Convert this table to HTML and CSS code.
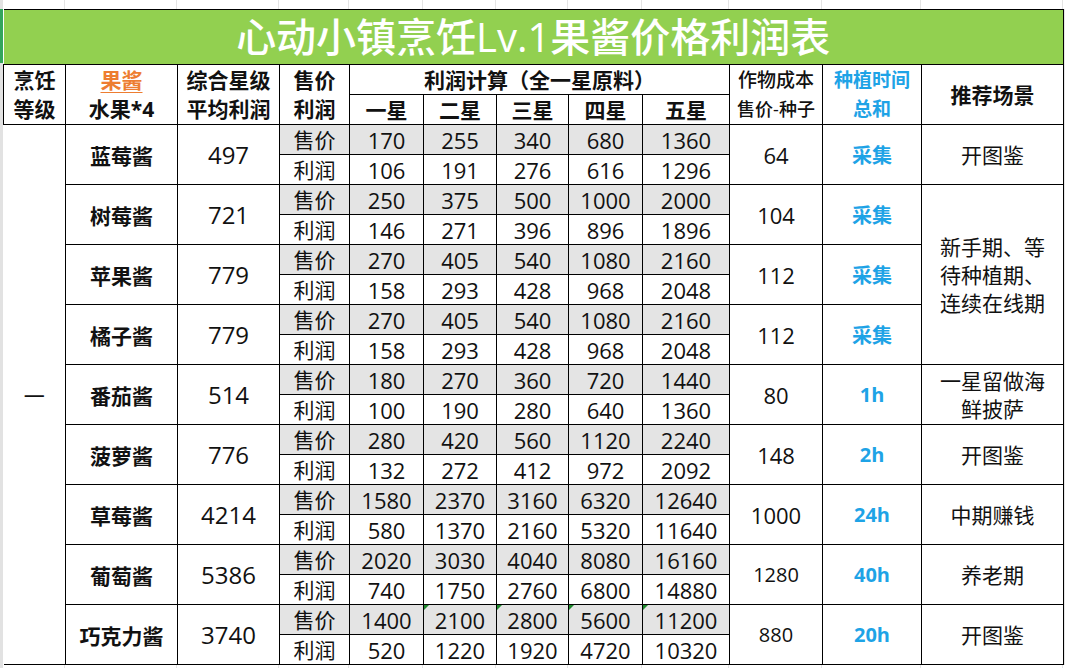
FILE: index.html
```html
<!DOCTYPE html>
<html lang="zh-CN">
<head>
<meta charset="utf-8">
<title>心动小镇烹饪Lv.1果酱价格利润表</title>
<link rel="stylesheet" href="styles.css">
</head>
<body>
<div class="page">
  <div class="gl top"><span></span><span></span><span></span><span></span><span></span><span></span><span></span><span></span><span></span><span></span><span></span><span></span></div>
  <div class="main">
    <div class="edge"></div>
    <table class="sheet">
      <colgroup>
        <col class="w1"><col class="w2"><col class="w3"><col class="w4">
        <col class="w5"><col class="w6"><col class="w7"><col class="w8"><col class="w9">
        <col class="w10"><col class="w11"><col class="w12">
      </colgroup>
      <tr class="title"><td colspan="12">心动小镇烹饪Lv.1果酱价格利润表</td></tr>
      <tr class="head">
        <td rowspan="2" class="h two">烹饪<br>等级</td>
        <td rowspan="2" class="h two"><span class="orange">果酱</span><br>水果*4</td>
        <td rowspan="2" class="h two">综合星级<br>平均利润</td>
        <td rowspan="2" class="h two">售价<br>利润</td>
        <td colspan="5" class="h">利润计算（全一星原料）</td>
        <td rowspan="2" class="h two cost-h">作物成本<br><span class="sub">售价-种子</span></td>
        <td rowspan="2" class="h two blue time-h">种植时间<br>总和</td>
        <td rowspan="2" class="h">推荐场景</td>
      </tr>
      <tr class="head">
        <td class="h">一星</td><td class="h">二星</td><td class="h">三星</td><td class="h">四星</td><td class="h">五星</td>
      </tr>

      <tr>
        <td rowspan="18" class="lvl">一</td>
        <td rowspan="2" class="name">蓝莓酱</td><td rowspan="2" class="avg">497</td>
        <td class="lab sell">售价</td><td class="v sell">170</td><td class="v sell">255</td><td class="v sell">340</td><td class="v sell">680</td><td class="v sell">1360</td>
        <td rowspan="2" class="cost">64</td><td rowspan="2" class="time">采集</td><td rowspan="2" class="rec">开图鉴</td>
      </tr>
      <tr><td class="lab">利润</td><td class="v">106</td><td class="v">191</td><td class="v">276</td><td class="v">616</td><td class="v">1296</td></tr>

      <tr>
        <td rowspan="2" class="name">树莓酱</td><td rowspan="2" class="avg">721</td>
        <td class="lab sell">售价</td><td class="v sell">250</td><td class="v sell">375</td><td class="v sell">500</td><td class="v sell">1000</td><td class="v sell">2000</td>
        <td rowspan="2" class="cost">104</td><td rowspan="2" class="time">采集</td><td rowspan="6" class="rec multi">新手期、等<br>待种植期、<br>连续在线期</td>
      </tr>
      <tr><td class="lab">利润</td><td class="v">146</td><td class="v">271</td><td class="v">396</td><td class="v">896</td><td class="v">1896</td></tr>

      <tr>
        <td rowspan="2" class="name">苹果酱</td><td rowspan="2" class="avg">779</td>
        <td class="lab sell">售价</td><td class="v sell">270</td><td class="v sell">405</td><td class="v sell">540</td><td class="v sell">1080</td><td class="v sell">2160</td>
        <td rowspan="2" class="cost">112</td><td rowspan="2" class="time">采集</td>
      </tr>
      <tr><td class="lab">利润</td><td class="v">158</td><td class="v">293</td><td class="v">428</td><td class="v">968</td><td class="v">2048</td></tr>

      <tr>
        <td rowspan="2" class="name">橘子酱</td><td rowspan="2" class="avg">779</td>
        <td class="lab sell">售价</td><td class="v sell">270</td><td class="v sell">405</td><td class="v sell">540</td><td class="v sell">1080</td><td class="v sell">2160</td>
        <td rowspan="2" class="cost">112</td><td rowspan="2" class="time">采集</td>
      </tr>
      <tr><td class="lab">利润</td><td class="v">158</td><td class="v">293</td><td class="v">428</td><td class="v">968</td><td class="v">2048</td></tr>

      <tr>
        <td rowspan="2" class="name">番茄酱</td><td rowspan="2" class="avg">514</td>
        <td class="lab sell">售价</td><td class="v sell">180</td><td class="v sell">270</td><td class="v sell">360</td><td class="v sell">720</td><td class="v sell">1440</td>
        <td rowspan="2" class="cost">80</td><td rowspan="2" class="time">1h</td><td rowspan="2" class="rec multi">一星留做海<br>鲜披萨</td>
      </tr>
      <tr><td class="lab">利润</td><td class="v">100</td><td class="v">190</td><td class="v">280</td><td class="v">640</td><td class="v">1360</td></tr>

      <tr>
        <td rowspan="2" class="name">菠萝酱</td><td rowspan="2" class="avg">776</td>
        <td class="lab sell">售价</td><td class="v sell">280</td><td class="v sell">420</td><td class="v sell">560</td><td class="v sell">1120</td><td class="v sell">2240</td>
        <td rowspan="2" class="cost">148</td><td rowspan="2" class="time">2h</td><td rowspan="2" class="rec">开图鉴</td>
      </tr>
      <tr><td class="lab">利润</td><td class="v">132</td><td class="v">272</td><td class="v">412</td><td class="v">972</td><td class="v">2092</td></tr>

      <tr>
        <td rowspan="2" class="name">草莓酱</td><td rowspan="2" class="avg">4214</td>
        <td class="lab sell">售价</td><td class="v sell">1580</td><td class="v sell">2370</td><td class="v sell">3160</td><td class="v sell">6320</td><td class="v sell">12640</td>
        <td rowspan="2" class="cost">1000</td><td rowspan="2" class="time">24h</td><td rowspan="2" class="rec">中期赚钱</td>
      </tr>
      <tr><td class="lab">利润</td><td class="v">580</td><td class="v">1370</td><td class="v">2160</td><td class="v">5320</td><td class="v">11640</td></tr>

      <tr>
        <td rowspan="2" class="name">葡萄酱</td><td rowspan="2" class="avg">5386</td>
        <td class="lab sell">售价</td><td class="v sell">2020</td><td class="v sell">3030</td><td class="v sell">4040</td><td class="v sell">8080</td><td class="v sell">16160</td>
        <td rowspan="2" class="cost small">1280</td><td rowspan="2" class="time">40h</td><td rowspan="2" class="rec">养老期</td>
      </tr>
      <tr><td class="lab">利润</td><td class="v">740</td><td class="v">1750</td><td class="v">2760</td><td class="v">6800</td><td class="v">14880</td></tr>

      <tr>
        <td rowspan="2" class="name">巧克力酱</td><td rowspan="2" class="avg">3740</td>
        <td class="lab sell">售价</td><td class="v sell">1400</td><td class="v sell flag">2100</td><td class="v sell flag">2800</td><td class="v sell flag">5600</td><td class="v sell flag">11200</td>
        <td rowspan="2" class="cost small">880</td><td rowspan="2" class="time">20h</td><td rowspan="2" class="rec">开图鉴</td>
      </tr>
      <tr><td class="lab">利润</td><td class="v">520</td><td class="v">1220</td><td class="v">1920</td><td class="v">4720</td><td class="v">10320</td></tr>
    </table>
    <div class="rest"></div>
  </div>
  <div class="gl bottom"><span></span><span></span><span></span><span></span><span></span><span></span><span></span><span></span><span></span><span></span><span></span><span></span></div>
</div>
</body>
</html>
```

FILE: styles.css
```css
html, body {
  margin: 0;
  padding: 0;
  background: #fff;
}

body {
  font-family: "Open Sans", "Noto Sans CJK SC", sans-serif;
  color: #111;
}

.page {
  width: 1065px;
  height: 668px;
  overflow: hidden;
  display: flex;
  flex-direction: column;
}

/* faint spreadsheet gridlines outside the table */
.gl {
  display: flex;
  flex: none;
  border-left: 3px solid #e2e2e2;
}
.gl.top { height: 9px; }
.gl.bottom { height: 20px; }
.gl span {
  flex: none;
  height: 100%;
  box-sizing: border-box;
  border-right: 1px solid #e4e4e4;
}
.gl span:nth-child(1) { width: 62px; }
.gl span:nth-child(2) { width: 112px; }
.gl span:nth-child(3) { width: 102px; }
.gl span:nth-child(4) { width: 70px; }
.gl span:nth-child(5) { width: 74px; }
.gl span:nth-child(6) { width: 73px; }
.gl span:nth-child(7) { width: 72px; }
.gl span:nth-child(8) { width: 74px; }
.gl span:nth-child(9) { width: 87px; }
.gl span:nth-child(10) { width: 93px; }
.gl span:nth-child(11) { width: 99px; }
.gl span:nth-child(12) { width: 142px; }

.main {
  display: flex;
  flex: none;
}

.edge {
  flex: none;
  width: 3px;
  background: linear-gradient(#33a55c 0, #33a55c 54px, #e2e2e2 54px);
}

.rest {
  flex: 1;
  background: #e6e6e6;
}

.sheet {
  flex: none;
  border-collapse: collapse;
  table-layout: fixed;
  width: 1061px;
}

.w1 { width: 62px; }
.w2 { width: 112px; }
.w3 { width: 102px; }
.w4 { width: 70px; }
.w5 { width: 74px; }
.w6 { width: 73px; }
.w7 { width: 72px; }
.w8 { width: 74px; }
.w9 { width: 87px; }
.w10 { width: 93px; }
.w11 { width: 99px; }
.w12 { width: 142px; }

.sheet td {
  border: 1px solid #000;
  padding: 0;
  text-align: center;
  vertical-align: middle;
  white-space: nowrap;
  position: relative;
}

.sheet tr { height: 30px; }

.sheet tr.title { height: 55px; }
.title td {
  background: #92d050;
  color: #fff;
  font-size: 40px;
  font-weight: 500;
  line-height: 46px;
  border-left: none;
}

.h {
  font-size: 21px;
  font-weight: 700;
  line-height: 28px;
  color: #111;
}
.h.two { line-height: 29px; }

.orange {
  color: #ed7d31;
  text-decoration: underline;
  text-underline-offset: 4px;
  text-decoration-thickness: 1px;
}

.cost-h { font-size: 19px; font-weight: 500; }
.cost-h .sub { font-size: 18px; }

.blue { color: #1ea3e6; }
.time-h { font-size: 19px; }

.lvl {
  font-size: 21px;
  border-left: none !important;
}

.name {
  font-size: 21px;
  font-weight: 700;
}

.avg {
  font-size: 24px;
  line-height: 30px;
}

.lab {
  font-size: 21px;
  line-height: 28px;
}

.v {
  font-size: 22px;
  line-height: 28px;
}

.sell { background: #e4e4e4; }

.flag::before {
  content: "";
  position: absolute;
  left: 0;
  top: 0;
  border-top: 5px solid #1f8a2e;
  border-right: 5px solid transparent;
}

.cost {
  font-size: 22px;
}
.cost.small { font-size: 20px; }

.time {
  font-size: 20px;
  font-weight: 700;
  color: #1ea3e6;
}

.rec {
  font-size: 21px;
  line-height: 28px;
}
```
